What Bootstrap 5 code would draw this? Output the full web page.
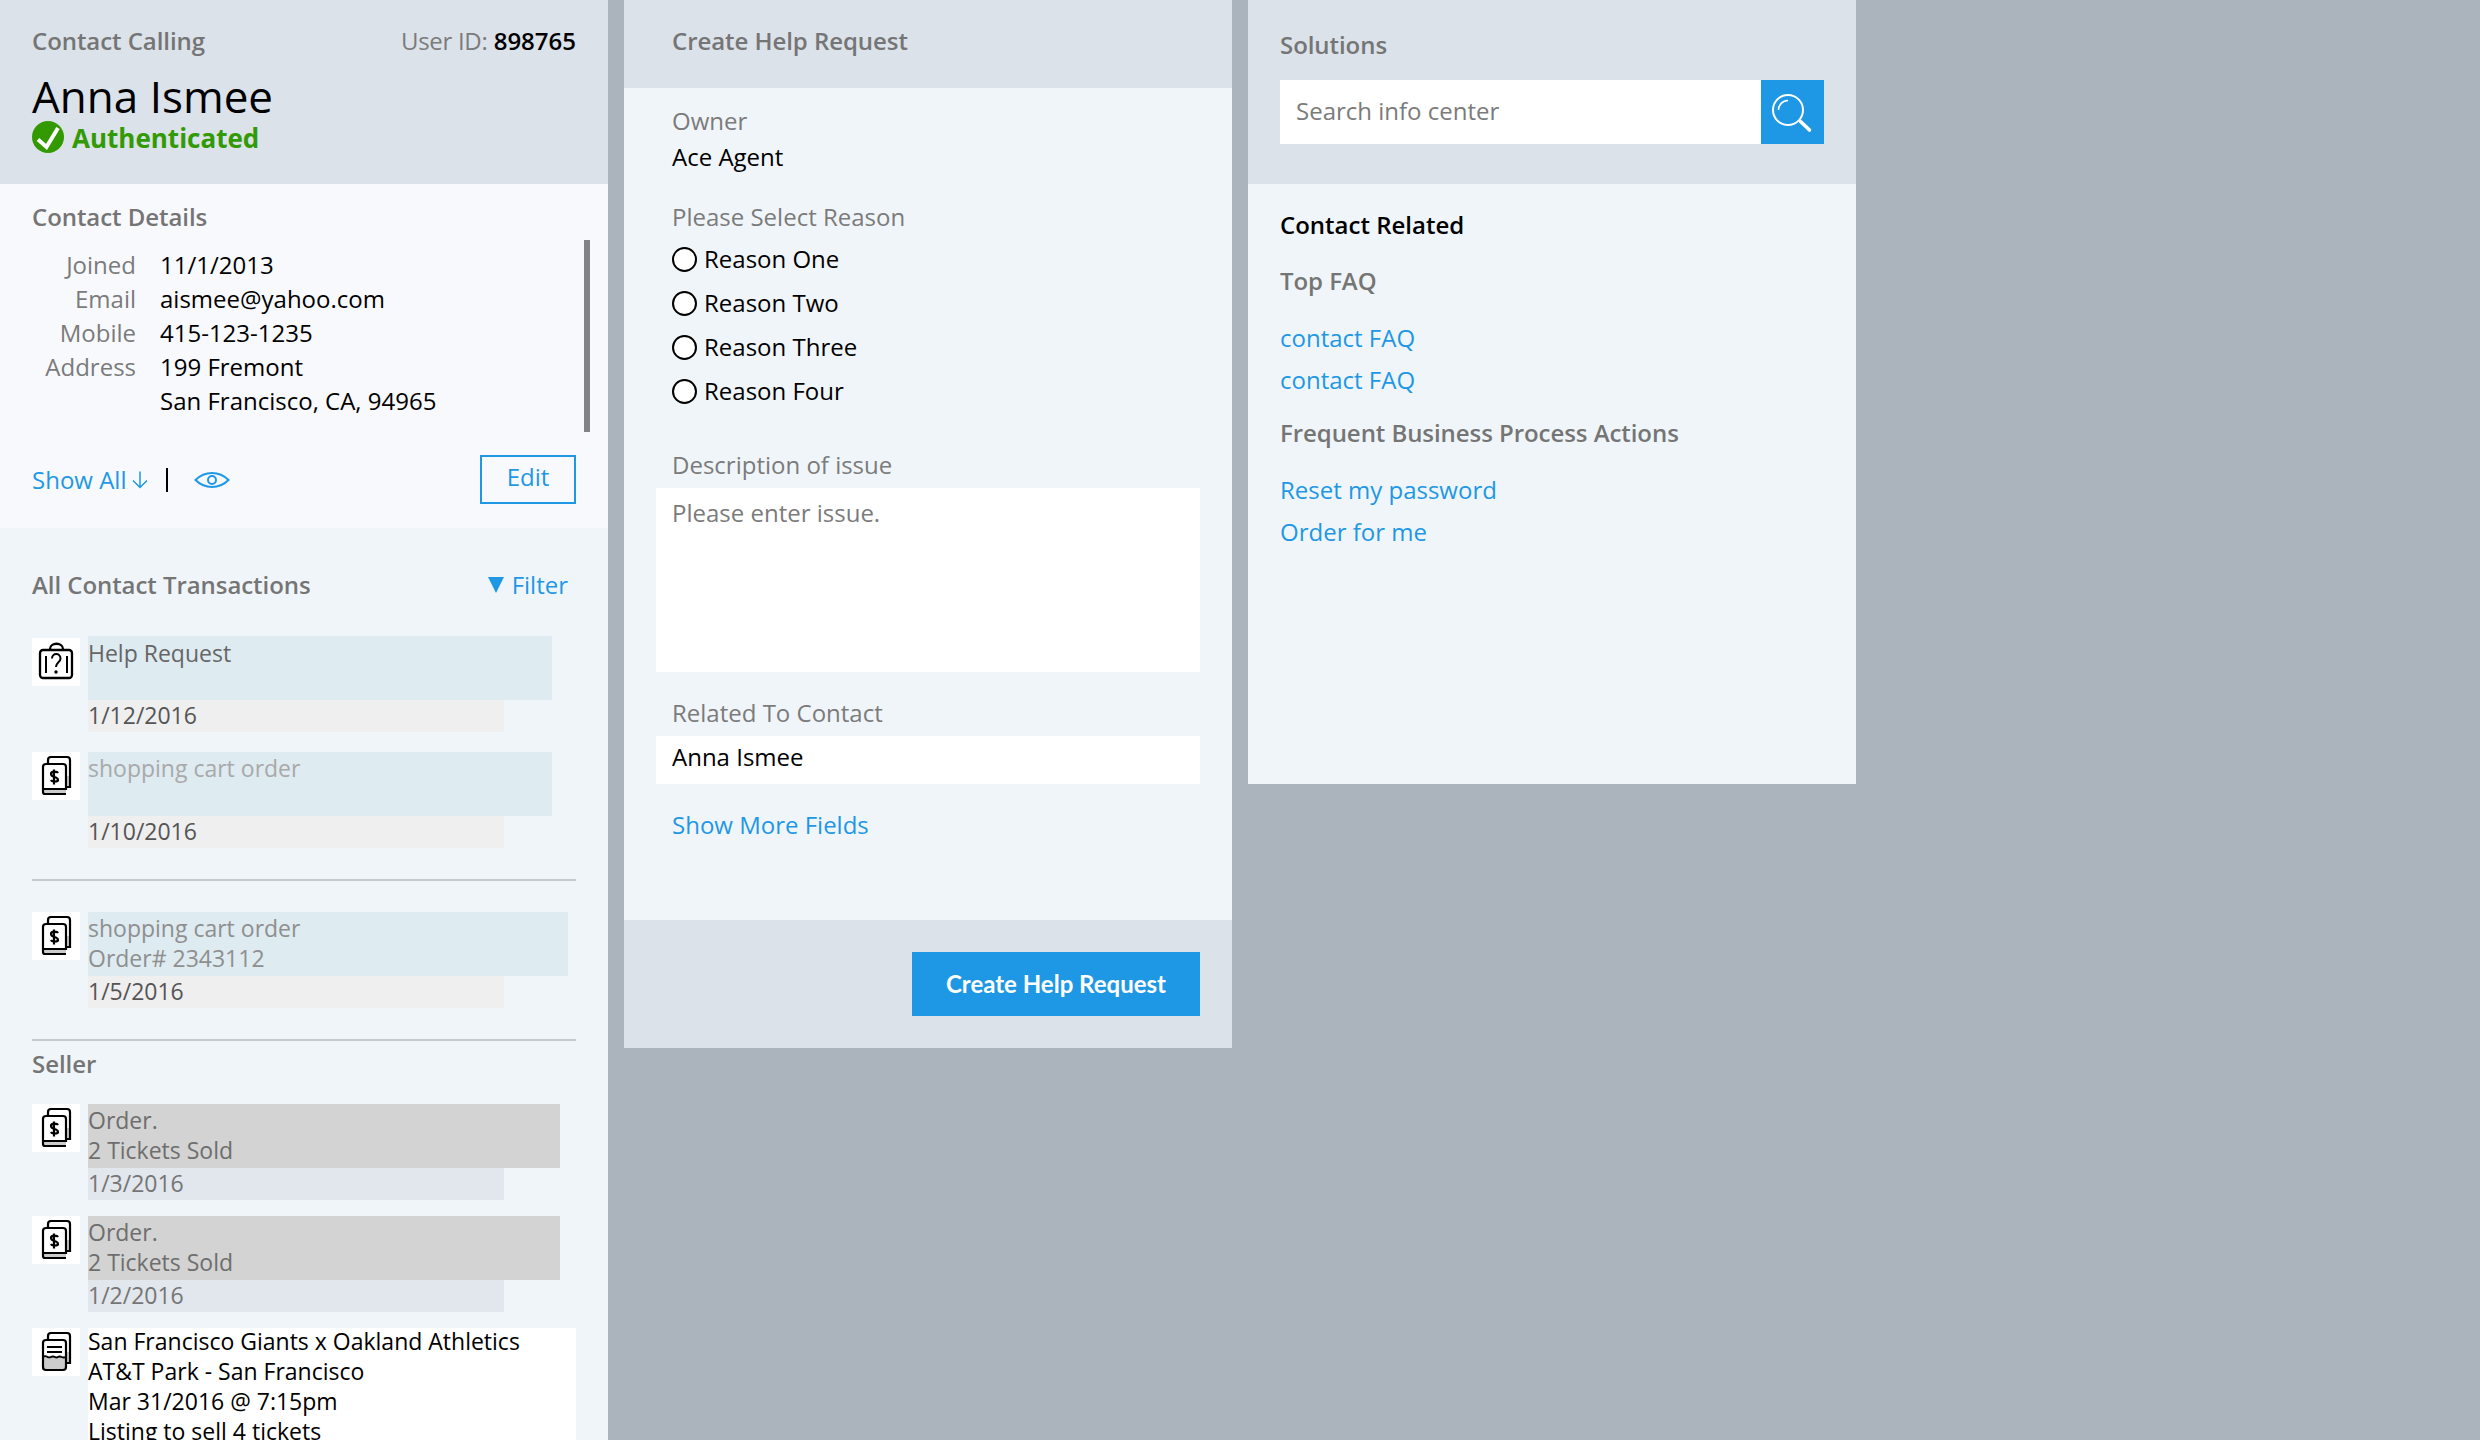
<!DOCTYPE html>
<html lang="en">
<head>
<meta charset="utf-8">
<title>Contact Calling</title>
<link rel="stylesheet" href="https://cdn.jsdelivr.net/npm/bootstrap@5.3.0/dist/css/bootstrap.min.css">
<style>
html,body{height:100%}
body{background:#abb3bd;font-family:"Open Sans","Noto Sans",sans-serif;font-size:24px;line-height:34px;color:#000;overflow:hidden}
a{color:#1e98e5;text-decoration:none}
.pane{width:608px;background:#f0f5f9;flex:none}
.pane-full{height:100vh;overflow:hidden}
.pane-head{background:#dbe2e9}
.sect-title{color:#757575;font-weight:600;letter-spacing:-.06px}
.muted-label{color:#7b7b7b}
.user-label{letter-spacing:-.3px}
.caller-head{padding:24px 32px 29px}
.caller-name{font-size:44px;line-height:48px;margin-top:14px;font-weight:400}
.auth-state{color:#329a05;font-weight:700;font-size:26px;margin-top:1px}
.auth-state svg{margin-top:-3px}
.details-panel{background:#f8f9fd;padding:16px 18px 24px 32px}
.details-scroll{margin-top:6px;height:192px;padding-top:8px}
.details-list{display:grid;grid-template-columns:104px auto;column-gap:24px;margin:0}
.details-list dt{font-weight:400;color:#7b7b7b;text-align:right}
.details-list dd{margin:0}
.fake-bar{width:6px;background:#808489}
.details-actions{margin-top:23px;margin-right:14px}
.show-arrow{margin-left:5px}
.divider-bar{width:2px;height:24px;background:#000;margin:0 26px 0 17px}
.edit-btn{--bs-btn-border-radius:0;--bs-btn-border-width:2px;--bs-btn-border-color:#1e98e5;--bs-btn-color:#1e98e5;--bs-btn-hover-bg:#1e98e5;--bs-btn-hover-border-color:#1e98e5;--bs-btn-font-size:24px;--bs-btn-line-height:30px;--bs-btn-padding-y:7px;--bs-btn-padding-x:0;width:96px;height:49px;padding-top:5px}
.tx-panel{padding:40px 32px 0}
.filter-link{margin-right:8px}
.filter-tri{width:16px;height:16px;margin-right:8px;margin-top:-1px}
.tx-item{margin-bottom:20px;gap:8px;font-size:23px}
.tx-icon{width:48px;height:48px;background:#fff;flex:none;display:block}
.tx-first{margin-top:34px}
.tx-first .tx-icon{margin-top:2px}
.tx-main{height:64px;padding-top:1px;line-height:30px;background:#deebf1;color:#666}
.tx-first .tx-main{padding-top:2px}
.tx-date{height:32px;line-height:30px;background:#efefef;color:#555;width:416px}
.tx-w1{width:464px}
.tx-w2{width:480px}
.tx-w3{width:472px}
.tx-faded{color:#a9a9a9}
.tx-mid{color:#8f8f8f}
.tx-sold .tx-main{background:#d3d3d3;color:#6e6e6e}
.tx-sold .tx-date{background:#e2e6ed;color:#757575}
.tx-sold{margin-bottom:16px}
.tx-rule{border:0;border-top:2px solid #c6c8cb;opacity:1;margin:31px 0}
.seller-title{margin-top:6px}
.tx-sold-first{margin-top:23px}
.tx-listing{line-height:30px;background:#fff;width:488px}
.tx-listing-text{margin-top:-2px}
.form-head{height:88px;padding:24px 48px 0}
.form-body{padding:16px 32px 78px}
.form-body .pad-x{padding-left:16px}
.form-check.reason{padding:0 0 0 16px;margin:0 0 10px;min-height:34px;display:flex;align-items:center;gap:7px}
.reason:last-child{margin-bottom:0}
.reason .form-check-input{float:none;margin:0;width:25px;height:25px;border:2px solid #000;background-color:#fff;flex:none}
.reason .form-check-label{line-height:34px}
.flat-field{border:0;border-radius:0;font-size:24px;line-height:34px;color:#000;padding:8px 16px;background:#fff}
.flat-field::placeholder{color:#7b7b7b;opacity:1}
textarea.flat-field{height:184px;resize:none}
input.flat-field{height:48px;padding:2px 16px 10px}
.form-foot{background:#dbe2e9;padding:32px 32px}
.submit-btn{--bs-btn-bg:#1e98e5;--bs-btn-border-color:#1e98e5;--bs-btn-hover-bg:#1e98e5;--bs-btn-hover-border-color:#1e98e5;--bs-btn-color:#fff;--bs-btn-hover-color:#fff;--bs-btn-border-radius:0;--bs-btn-font-family:Lato,sans-serif;--bs-btn-font-size:24px;--bs-btn-font-weight:700;width:288px;height:64px}
.sol-head{padding:28px 32px 40px}
.sol-search{margin-top:18px}
.sol-search input.flat-field{height:64px;padding:0 16px 3px}
.sol-go{width:64px;height:64px;background:#1e98e5;border:0;border-radius:0;padding:0;flex:none}
.sol-go svg{display:block}
.sol-body{padding:24px 32px 235px}
</style>
</head>
<body>
<div class="d-flex align-items-start" style="gap:16px">

  <section class="pane pane-full">
    <header class="pane-head caller-head">
      <div class="d-flex justify-content-between">
        <span class="sect-title">Contact Calling</span>
        <span class="muted-label"><span class="user-label">User ID:</span> <span class="fw-semibold text-black">898765</span></span>
      </div>
      <div class="caller-name">Anna Ismee</div>
      <div class="d-flex align-items-center gap-2 auth-state">
        <svg width="32" height="32" viewBox="0 0 32 32" aria-hidden="true"><circle cx="16" cy="16" r="16" fill="#339900"/><path d="M6 18.500l8.500 7.500L26 7" fill="none" stroke="#fff" stroke-width="4"/></svg>
        <span>Authenticated</span>
      </div>
    </header>

    <div class="details-panel">
      <div class="sect-title">Contact Details</div>
      <div class="d-flex justify-content-between">
        <div class="details-scroll flex-grow-1">
          <dl class="details-list">
            <dt>Joined</dt><dd>11/1/2013</dd>
            <dt>Email</dt><dd>aismee@yahoo.com</dd>
            <dt>Mobile</dt><dd>415-123-1235</dd>
            <dt>Address</dt><dd>199 Fremont<br>San Francisco, CA, 94965</dd>
          </dl>
        </div>
        <div class="fake-bar details-scroll"></div>
      </div>
      <div class="d-flex align-items-center details-actions">
        <a href="#" class="d-flex align-items-center">Show All
          <svg class="show-arrow" width="18" height="18" viewBox="0 0 18 18" aria-hidden="true"><path d="M9 1v15M2 10l7 7 7-7" transform="translate(0 -.5)" fill="none" stroke="#1e98e5" stroke-width="1.500"/></svg>
        </a>
        <span class="divider-bar"></span>
        <a href="#" aria-label="View" class="d-flex">
          <svg width="36" height="16" viewBox="0 0 36 16" aria-hidden="true"><path d="M1.500 8C7 2.500 12 1 18 1s11 1.500 16.500 7C29 13.500 24 15 18 15S7 13.500 1.500 8z" fill="none" stroke="#1e98e5" stroke-width="2"/><circle cx="18" cy="8" r="4" fill="none" stroke="#1e98e5" stroke-width="2"/></svg>
        </a>
        <a href="#" class="btn edit-btn ms-auto">Edit</a>
      </div>
    </div>

    <div class="tx-panel">
      <div class="d-flex justify-content-between">
        <span class="sect-title">All Contact Transactions</span>
        <a href="#" class="filter-link d-flex align-items-center">
          <svg class="filter-tri" viewBox="0 0 16 16" aria-hidden="true"><path d="M0 0h16L8 16z" fill="#1e98e5"/></svg>Filter
        </a>
      </div>

      <div class="d-flex tx-item tx-first">
        <svg class="tx-icon" viewBox="0 0 48 48" aria-hidden="true"><g fill="none" stroke="#000" stroke-width="2.300"><rect x="8" y="12" width="32" height="28" rx="3"/><path d="M18 12v-1c0-7 13-7 13 0v1"/><path d="M14 18v17M35 18v17" stroke-width="2"/><path d="M20 20.500c0-6 8.500-6 8.500 0 0 4-4.500 3.500-4.500 8.500" stroke-width="2"/></g><circle cx="24" cy="34" r="1.700"/></svg>
        <div>
          <div class="tx-main tx-w1">Help Request</div>
          <div class="tx-date">1/12/2016</div>
        </div>
      </div>
      <div class="d-flex tx-item mb-0">
        <svg class="tx-icon" viewBox="0 0 48 48" aria-hidden="true"><use href="#book-shape"/><path d="M22 17.500v15M26 21c-1-2-7-2-7 1 0 4 7 2 7 6 0 2-6 2-7 0" fill="none" stroke="#000" stroke-width="2.200"/></svg>
        <div>
          <div class="tx-main tx-w1 tx-faded">shopping cart order</div>
          <div class="tx-date">1/10/2016</div>
        </div>
      </div>

      <hr class="tx-rule">

      <div class="d-flex tx-item mb-0">
        <svg class="tx-icon" viewBox="0 0 48 48" aria-hidden="true"><use href="#book-shape"/><path d="M22 17.500v15M26 21c-1-2-7-2-7 1 0 4 7 2 7 6 0 2-6 2-7 0" fill="none" stroke="#000" stroke-width="2.200"/></svg>
        <div>
          <div class="tx-main tx-w2 tx-mid">shopping cart order<br>Order# 2343112</div>
          <div class="tx-date">1/5/2016</div>
        </div>
      </div>
      <hr class="tx-rule mb-0">

      <div class="sect-title seller-title">Seller</div>

      <div class="d-flex tx-item tx-sold tx-sold-first">
        <svg class="tx-icon" viewBox="0 0 48 48" aria-hidden="true"><use href="#book-shape"/><path d="M22 17.500v15M26 21c-1-2-7-2-7 1 0 4 7 2 7 6 0 2-6 2-7 0" fill="none" stroke="#000" stroke-width="2.200"/></svg>
        <div>
          <div class="tx-main tx-w3">Order.<br>2 Tickets Sold</div>
          <div class="tx-date">1/3/2016</div>
        </div>
      </div>
      <div class="d-flex tx-item tx-sold">
        <svg class="tx-icon" viewBox="0 0 48 48" aria-hidden="true"><use href="#book-shape"/><path d="M22 17.500v15M26 21c-1-2-7-2-7 1 0 4 7 2 7 6 0 2-6 2-7 0" fill="none" stroke="#000" stroke-width="2.200"/></svg>
        <div>
          <div class="tx-main tx-w3">Order.<br>2 Tickets Sold</div>
          <div class="tx-date">1/2/2016</div>
        </div>
      </div>
      <div class="d-flex tx-item">
        <svg class="tx-icon" viewBox="0 0 48 48" aria-hidden="true"><path d="M34 24h4v11h-4z" fill="#ccc"/><path d="M10 28c4-3 4 2 8 0s4 2 8 0 4 2 8 0v14H10z" fill="#ccc"/><path d="M16 12V8a3 3 0 0 1 3-3h16a3 3 0 0 1 3 3v27h-4" fill="none" stroke="#000" stroke-width="2.200"/><rect x="11" y="12" width="23" height="30" rx="3" fill="none" stroke="#000" stroke-width="2.200"/><path d="M15 19h15M15 24h15M11 29c4-3 4 2 8 0s4 2 7 0 4 2 8 0" fill="none" stroke="#000" stroke-width="1.800"/></svg>
        <div class="tx-listing"><div class="tx-listing-text">San Francisco Giants x Oakland Athletics<br>AT&amp;T Park - San Francisco<br>Mar 31/2016 @ 7:15pm<br>Listing to sell 4 tickets</div></div>
      </div>
    </div>
  </section>

  <section class="pane">
    <header class="pane-head form-head sect-title">Create Help Request</header>
    <form class="form-body">
      <div class="pad-x muted-label">Owner</div>
      <div class="pad-x" style="margin-top:2px">Ace Agent</div>
      <div class="pad-x muted-label" style="margin-top:26px">Please Select Reason</div>
      <div style="margin-top:8px">
        <div class="form-check reason"><input class="form-check-input" type="radio" name="reason" id="r1"><label class="form-check-label" for="r1">Reason One</label></div>
        <div class="form-check reason"><input class="form-check-input" type="radio" name="reason" id="r2"><label class="form-check-label" for="r2">Reason Two</label></div>
        <div class="form-check reason"><input class="form-check-input" type="radio" name="reason" id="r3"><label class="form-check-label" for="r3">Reason Three</label></div>
        <div class="form-check reason"><input class="form-check-input" type="radio" name="reason" id="r4"><label class="form-check-label" for="r4">Reason Four</label></div>
      </div>
      <label class="d-block pad-x muted-label" for="issue" style="margin-top:40px;margin-bottom:6px">Description of issue</label>
      <textarea class="form-control flat-field" id="issue" placeholder="Please enter issue."></textarea>
      <label class="d-block pad-x muted-label" for="related" style="margin-top:24px;margin-bottom:6px">Related To Contact</label>
      <input class="form-control flat-field" id="related" value="Anna Ismee">
      <div class="pad-x" style="margin-top:24px"><a href="#">Show More Fields</a></div>
    </form>
    <footer class="form-foot d-flex justify-content-end">
      <button type="button" class="btn submit-btn">Create Help Request</button>
    </footer>
  </section>

  <section class="pane">
    <header class="pane-head sol-head">
      <div class="sect-title">Solutions</div>
      <div class="input-group sol-search flex-nowrap">
        <input class="form-control flat-field" placeholder="Search info center">
        <button type="button" class="sol-go" aria-label="Search">
          <svg width="64" height="64" viewBox="0 0 64 64" aria-hidden="true"><g fill="none" stroke="#fff"><circle cx="28" cy="30" r="15" stroke-width="2"/><path d="M18.500 30c0-5 4-9.500 9.500-9.500" stroke-width="1.600"/><path d="M40.500 41.500l9 8.500" stroke-width="3.600" stroke-linecap="round"/></g></svg>
        </button>
      </div>
    </header>
    <div class="sol-body">
      <div class="fw-semibold">Contact Related</div>
      <div class="sect-title" style="margin-top:22px">Top FAQ</div>
      <div style="margin-top:23px"><a href="#">contact FAQ</a></div>
      <div style="margin-top:8px"><a href="#">contact FAQ</a></div>
      <div class="sect-title" style="margin-top:19px">Frequent Business Process Actions</div>
      <div style="margin-top:23px"><a href="#">Reset my password</a></div>
      <div style="margin-top:8px"><a href="#">Order for me</a></div>
    </div>
  </section>
</div>

<svg width="0" height="0" class="position-absolute" aria-hidden="true">
  <defs>
    <g id="book-shape">
      <path d="M34 24h4v11h-4z" fill="#ccc"/>
      <path d="M16 12V8a3 3 0 0 1 3-3h16a3 3 0 0 1 3 3v27h-4" fill="none" stroke="#000" stroke-width="2.200"/>
      <rect x="11" y="37" width="23" height="5" fill="#ccc"/>
      <path d="M34 42H13a2 2 0 0 1-2-2V15a3 3 0 0 1 3-3h17a3 3 0 0 1 3 3v22H11" fill="none" stroke="#000" stroke-width="2.200"/>
    </g>
  </defs>
</svg>
</body>
</html>
